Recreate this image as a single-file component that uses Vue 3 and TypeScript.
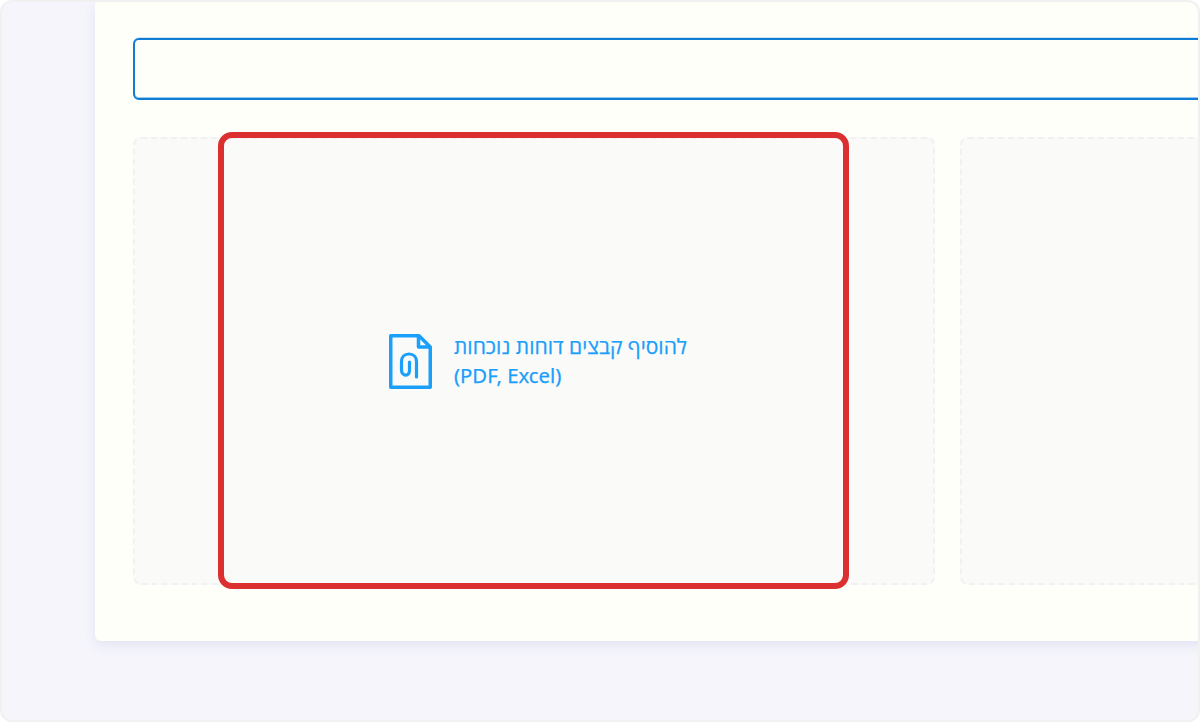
<template>
  <div class="frame">
    <div class="card">
      <input class="field" type="text" />
      <div class="zones">
        <div class="zone">
          <div class="upload">
            <svg class="file-icon" width="43" height="55" viewBox="0 0 43 55" fill="none" stroke="#1a9ffa" stroke-width="3.500" stroke-linejoin="round">
              <path d="M1.750 1.750H30L41.250 13V53.250H1.750Z" />
              <path d="M29.500 2V13H41" />
              <path d="M27.500 43V27.500C27.500 23 24.500 20 20 20C15.500 20 12.500 23 12.500 27.500V36C12.500 39 14.500 41.200 16.800 41.200C19 41.200 20.500 39 20.500 36V28" stroke-linecap="round" stroke-width="3.200" />
            </svg>
            <div class="label">
              <span class="hebrew">להוסיף קבצים דוחות נוכחות</span>
              <span class="latin">(PDF, Excel)</span>
            </div>
          </div>
        </div>
        <div class="zone"></div>
      </div>
      <div class="highlight"></div>
    </div>
  </div>
</template>

<script setup lang="ts">
</script>

<style>
html,
body {
  margin: 0;
  overflow: hidden;
}
</style>

<style scoped>
.frame {
  box-sizing: border-box;
  width: 1200px;
  height: 722px;
  padding-left: 93px;
  overflow: hidden;
  background: #f5f5fb;
  border: 2px solid #f1f1f1;
  border-radius: 12px;
}

.card {
  position: relative;
  box-sizing: border-box;
  width: 1300px;
  height: 639px;
  padding: 36px 38px;
  background: #fffff9;
  border-radius: 0 0 6px 6px;
  box-shadow: 0 4px 12px rgba(90, 110, 190, 0.12);
}

.field {
  display: block;
  box-sizing: border-box;
  width: 100%;
  height: 62px;
  background: #fffff9;
  border: 2px solid #0f7cd6;
  border-radius: 6px;
  outline: none;
  box-shadow: 0 -1px 0 rgba(15, 124, 214, 0.2), inset 0 -1px 0 rgba(15, 124, 214, 0.4);
}

.zones {
  display: grid;
  grid-template-columns: 802px 802px;
  gap: 25px;
  margin-top: 37px;
}

.zone {
  box-sizing: border-box;
  display: flex;
  align-items: center;
  justify-content: center;
  height: 448px;
  background: #fafaf9;
  border: 2px dashed #f1f1f4;
  border-radius: 8px;
}

.upload {
  display: flex;
  align-items: center;
  gap: 22px;
  margin-left: 8px;
}

.label {
  display: flex;
  flex-direction: column;
  font-family: "Noto Sans", "Open Sans", "DejaVu Sans", sans-serif;
  line-height: 29px;
  color: #1a9ffa;
  -webkit-text-stroke: 0.25px #1a9ffa;
}

.hebrew {
  font-size: 21px;
}

.latin {
  font-size: 20.300px;
}

.highlight {
  position: absolute;
  left: 123px;
  top: 130px;
  box-sizing: border-box;
  width: 631px;
  height: 457px;
  border: 6px solid #dc3030;
  border-radius: 14px;
}
</style>
